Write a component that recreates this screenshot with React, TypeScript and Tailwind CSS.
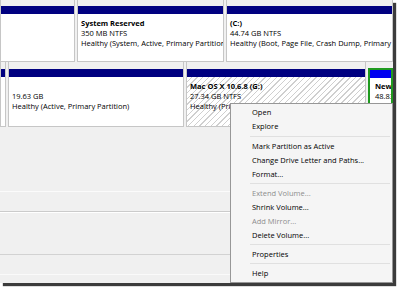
import React from "react";

// Disk Management: partitions with context menu opened
interface Partition {
  w: string;
  title?: string;
  size?: string;
  status?: string;
  hatched?: boolean;
}

const DISK0: Partition[] = [
  { w: "w-[75px] shrink-0", title: "", size: "", status: "" },
  { w: "w-[147px] shrink-0", title: "System Reserved", size: "350 MB NTFS", status: "Healthy (System, Active, Primary Partition)" },
  { w: "flex-1 min-w-0", title: "(C:)", size: "44.74 GB NTFS", status: "Healthy (Boot, Page File, Crash Dump, Primary Partition)" },
];

const DISK1: Partition[] = [
  { w: "w-[6px] shrink-0" },
  { w: "w-[176px] shrink-0", title: "", size: "19.63 GB", status: "Healthy (Active, Primary Partition)" },
  { w: "w-[180px] shrink-0", title: "Mac OS X 10.6.8  (G:)", size: "27.34 GB NTFS", status: "Healthy (Primary Partition)", hatched: true },
];

type MenuEntry = { label: string; disabled?: boolean } | { sep: "first" | "rest" };

const MENU: MenuEntry[] = [
  { label: "Open" },
  { label: "Explore" },
  { sep: "first" },
  { label: "Mark Partition as Active" },
  { label: "Change Drive Letter and Paths..." },
  { label: "Format..." },
  { sep: "rest" },
  { label: "Extend Volume...", disabled: true },
  { label: "Shrink Volume..." },
  { label: "Add Mirror...", disabled: true },
  { label: "Delete Volume..." },
  { sep: "rest" },
  { label: "Properties" },
  { sep: "rest" },
  { label: "Help" },
];

const PartitionBox = ({ p, top }: { p: Partition; top: string }) => (
  <div className={`${p.w} flex flex-col ${top} border-x border-[#c6c6c6]`}>
    <div className="h-[8px] bg-[#000080]" />
    <div
      className={`flex-1 border-b border-[#c6c6c6] pl-[3px] pt-[4px] leading-[10px] whitespace-nowrap overflow-hidden ${
        p.hatched
          ? "bg-[repeating-linear-gradient(135deg,#ffffff_0px,#ffffff_3px,#cfcfcf_3px,#cfcfcf_4px)]"
          : "bg-white"
      }`}
    >
      <div className="font-bold h-[10px]">{p.title}</div>
      <div className="h-[10px]">{p.size}</div>
      {/* the menu hides the rest of the hatched partition's status */}
      <div className={`h-[10px] overflow-hidden ${p.hatched ? "w-[40px]" : ""}`}>{p.status}</div>
    </div>
  </div>
);

const App = () => {
  return (
    <div className="w-[398px] h-[289px] bg-white">
      <div className="relative w-[393px] h-[283px] bg-[#f0f0f0] shadow-[3px_3px_1px_#3c3c3c] overflow-hidden font-['Open_Sans',sans-serif] text-[7.5px] text-black">
        {/* Disk 0 */}
        <div className="flex gap-[2px] h-[62px]">
          {DISK0.map((p, i) => (
            <PartitionBox key={i} p={p} top="pt-[6px]" />
          ))}
        </div>

        {/* Disk 1 */}
        <div className="flex gap-[2px] h-[65px]">
          {DISK1.map((p, i) => (
            <PartitionBox key={i} p={p} top="pt-[7px]" />
          ))}
          <div className="flex-1 min-w-0 flex flex-col pt-[6px]">
            <div className="flex-1 flex flex-col border-2 border-[#1f9a1f]">
              <div className="h-[8px] bg-[#0000f0]" />
              <div className="flex-1 bg-white pl-[5px] pt-[3px] leading-[10px] whitespace-nowrap overflow-hidden">
                <div className="font-bold h-[10px]">New</div>
                <div className="h-[10px]">48.83</div>
              </div>
            </div>
          </div>
        </div>

        {/* empty area below the disks */}
        <div className="h-[64px]" />
        <div className="h-[20px] border-t border-[#fbfbfb]" />
        <div className="h-[43px] border-t border-[#cbcbcb] shadow-[inset_0_1px_0_#ffffff]" />
        <div className="h-[20px] border-t border-[#d2d2d2]" />
        <div className="border-t border-[#fafafa]" />

        {/* context menu */}
        <div className="absolute left-[230px] right-0 top-[103px] h-[180px] bg-[#f5f5f5] border border-[#979797] pt-[1px] pb-[2px] shadow-[2px_2px_2px_rgba(0,0,0,0.3)]">
          {MENU.map((m, i) =>
            "sep" in m ? (
              <div key={i} className={m.sep === "first" ? "h-[6px] pt-[3px]" : "h-[5px] pt-[2px]"}>
                <div className="ml-[19px] mr-[2px] h-[1px] bg-[#e0e0e0]" />
              </div>
            ) : (
              <div
                key={i}
                className={`h-[14px] leading-[14px] pl-[21px] whitespace-nowrap ${
                  m.disabled ? "text-[#8d8d8d]" : "text-black"
                }`}
              >
                {m.label}
              </div>
            )
          )}
        </div>
      </div>
    </div>
  );
};

export default App;
